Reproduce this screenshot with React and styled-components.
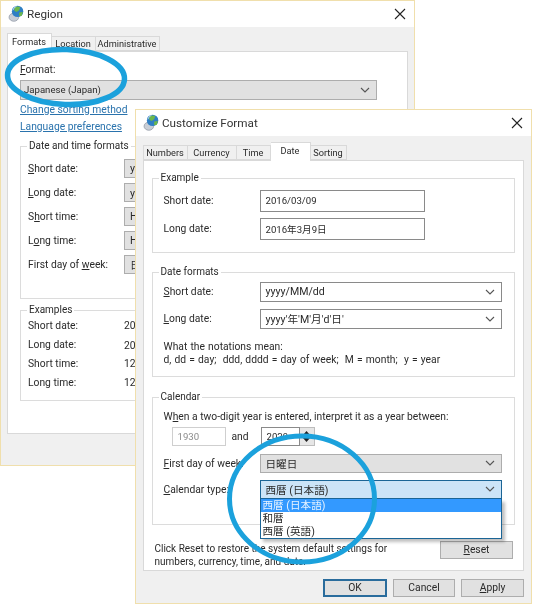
import React from "react";
import styled, { createGlobalStyle } from "styled-components";

const Global = createGlobalStyle`
  html, body { margin: 0; padding: 0; background: #fff; }
  * { box-sizing: border-box; }
`;

const Desktop = styled.div`
  position: relative;
  width: 539px;
  height: 607px;
  overflow: hidden;
  background: #fff;
  font-family: "Roboto", "Noto Sans CJK JP", sans-serif;
  font-size: 10.3px;
  color: #2a2a2a;
  filter: blur(0.3px);
`;

const Window = styled.section`
  position: absolute;
  left: ${(p) => p.$left}px;
  top: ${(p) => p.$top}px;
  width: ${(p) => p.$width}px;
  height: ${(p) => p.$height}px;
  display: flex;
  flex-direction: column;
  border: 1.5px solid #f0dfac;
  background: #fff;
`;

const TitleBar = styled.header`
  flex: 0 0 ${(p) => p.$h}px;
  display: flex;
  align-items: center;
  gap: 2px;
  padding: 0 8px 0 7px;
  background: #fff;
  font-size: 11.7px;
  color: #333;
`;

const TitleText = styled.span`
  flex: 1;
`;

const Body = styled.div`
  flex: 1;
  display: flex;
  flex-direction: column;
  background: #f0f0f0;
  padding: ${(p) => p.$pad};
`;

const TabStrip = styled.div`
  flex: 0 0 auto;
  height: ${(p) => p.$h}px;
  display: flex;
  align-items: flex-end;
  position: relative;
  z-index: 1;
`;

const Tab = styled.div`
  width: ${(p) => p.$w}px;
  height: ${(p) => (p.$active ? "calc(100% + 1px)" : "calc(100% - 3px)")};
  margin-bottom: ${(p) => (p.$active ? "-1px" : "0")};
  display: flex;
  align-items: center;
  justify-content: center;
  border: 1px solid #d9d9d9;
  border-bottom: ${(p) => (p.$active ? "none" : "1px solid #d9d9d9")};
  border-left-width: ${(p) => (p.$first ? 1 : 0)}px;
  background: ${(p) => (p.$active ? "#fff" : "#f0f0f0")};
  font-size: 9.2px;
  white-space: nowrap;
  padding-bottom: ${(p) => (p.$active ? 2 : 0)}px;
  padding-top: ${(p) => (p.$active ? 0 : 1)}px;
`;

const TabPanel = styled.div`
  height: ${(p) => p.$h}px;
  border: 1px solid #d9d9d9;
  background: #fff;
  padding: ${(p) => p.$pad};
  display: flex;
  flex-direction: column;
`;

const FieldLabel = styled.div`
  height: 14px;
  line-height: 14px;
`;

const Group = styled.div`
  position: relative;
  flex: 0 0 auto;
  height: ${(p) => p.$h}px;
  margin-top: ${(p) => p.$mt || 0}px;
  padding: ${(p) => p.$pad};
  border: 1px solid #dcdcdc;
`;

const Legend = styled.span`
  position: absolute;
  left: 6px;
  top: -8px;
  padding: 0 2px;
  font-size: 10px;
  line-height: 14px;
  background: #fff;
  white-space: nowrap;
`;

const Row = styled.div`
  display: grid;
  grid-template-columns: 96px 1fr;
  align-items: center;
  height: ${(p) => p.$h || 19}px;
  margin-top: ${(p) => p.$mt || 0}px;
  position: relative;
`;

const TextRow = styled(Row)`
  white-space: nowrap;
`;

const Select = styled.div`
  height: ${(p) => p.$h || "100%"};
  margin-top: ${(p) => p.$mt || 0}px;
  flex: none;
  display: flex;
  align-items: center;
  justify-content: space-between;
  padding: 0 6px 0 ${(p) => p.$pl || 5}px;
  font-size: ${(p) => p.$fs || 10.6}px;
  background: ${(p) =>
    p.$focus ? "#cce4f7" : p.$editable ? "#fff" : "#e1e1e1"};
  border: 1px solid
    ${(p) => (p.$focus ? "#1b6596" : p.$editable ? "#8a8a8a" : "#adadad")};
  white-space: nowrap;
  overflow: hidden;
`;

const Input = styled.div`
  width: ${(p) => p.$w}px;
  height: 100%;
  display: flex;
  align-items: center;
  padding: 0 5px;
  font-size: 9.6px;
  background: #fff;
  border: 1px solid ${(p) => (p.$disabled ? "#cfcfcf" : "#8a8a8a")};
  color: ${(p) => (p.$disabled ? "#8c8c8c" : "inherit")};
  white-space: nowrap;
`;

const YearRow = styled.div`
  display: flex;
  align-items: center;
  height: 19px;
  margin: 3px 0 0 8px;
`;

const And = styled.span`
  width: 35px;
  padding-left: 6px;
`;

const Spin = styled.div`
  width: 15px;
  height: 100%;
  display: flex;
  flex-direction: column;
  align-items: center;
  justify-content: space-evenly;
  background: #e6e6e6;
  border: 1px solid #bdbdbd;
  border-left: none;
  font-size: 0;
`;

const Arrow = styled.svg`
  width: 7px;
  height: 4px;
  fill: #222;
`;

const Link = styled.div`
  color: #2a73ad;
  text-decoration: underline;
  line-height: 14px;
  margin-top: ${(p) => p.$mt}px;
`;

const Notes = styled.div`
  margin-top: 11px;
  line-height: 13px;
  word-spacing: 0.6px;
  white-space: pre;
`;

const Intro = styled.div`
  line-height: 14px;
  white-space: nowrap;
`;

const Dropdown = styled.ul`
  position: absolute;
  left: 96px;
  right: 0;
  top: 100%;
  margin: 0;
  padding: 0;
  list-style: none;
  font-size: 10.6px;
  background: #fff;
  border: 1px solid #1b6596;
  border-top: none;
  box-shadow: 3px 3px 3px rgba(0, 0, 0, 0.25);
  z-index: 2;
`;

const Option = styled.li`
  height: 13px;
  line-height: 13px;
  padding-left: 2px;
  background: ${(p) => (p.$selected ? "#3399ff" : "transparent")};
  color: ${(p) => (p.$selected ? "#e8f3ff" : "inherit")};
`;

const HelpRow = styled.div`
  display: flex;
  justify-content: space-between;
  align-items: flex-start;
  margin: 17px 2px 0 3px;
`;

const HelpText = styled.div`
  font-size: 10px;
  line-height: 13px;
  white-space: nowrap;
`;

const ResetButton = styled.div`
  width: 73px;
  height: 18px;
  margin-top: -1px;
  display: flex;
  align-items: center;
  justify-content: center;
  background: #e1e1e1;
  border: 1px solid #adadad;
`;

const Button = styled.div`
  width: ${(p) => p.$w}px;
  height: 18px;
  display: flex;
  align-items: center;
  justify-content: center;
  background: #e1e1e1;
  border: ${(p) => (p.$default ? "2px solid #2a6c9c" : "1px solid #adadad")};
`;

const Footer = styled.footer`
  display: flex;
  justify-content: flex-end;
  gap: 6px;
  margin-top: 8px;
`;

const Rings = styled.svg`
  position: absolute;
  left: 0;
  top: 0;
  width: 539px;
  height: 607px;
  z-index: 5;
  pointer-events: none;
`;

const U = styled.span`
  text-decoration: underline;
`;

const CloseSvg = styled.svg`
  width: 12px;
  height: 12px;
  stroke: #222;
  stroke-width: 1.1;
  flex: none;
`;

const ChevronSvg = styled.svg`
  width: 10px;
  height: 6px;
  fill: none;
  stroke: #555;
  stroke-width: 1.1;
  flex: none;
`;

const GlobeSvg = styled.svg`
  width: 17px;
  height: 17px;
  flex: none;
`;

const Chevron = () => (
  <ChevronSvg viewBox="0 0 10 6">
    <polyline points="1,1 5,5 9,1" />
  </ChevronSvg>
);

const Close = () => (
  <CloseSvg viewBox="0 0 12 12">
    <path d="M1 1 L11 11 M11 1 L1 11" />
  </CloseSvg>
);

const Globe = () => (
  <GlobeSvg viewBox="0 0 16 16">
    <ellipse cx="5.5" cy="11.5" rx="4.5" ry="3.8" fill="#c9ced6" stroke="#8d96a3" strokeWidth="0.7" />
    <circle cx="9" cy="6" r="5.4" fill="#2f7fc4" />
    <path d="M6 2.5 Q9 0.5 11.5 2 L10.5 5 L8 6.5 L6 5.5 Z M10.5 7 L14 6.5 L13 10 L10.5 10.5 Z" fill="#6cb84a" />
    <path d="M4.5 5 Q5.5 2 8 1.2" stroke="#cfe6f7" strokeWidth="0.8" fill="none" />
  </GlobeSvg>
);

const App = () => (
  <Desktop>
    <Global />

    <Window $left={0} $top={0} $width={415} $height={466}>
      <TitleBar $h={25.5}>
        <Globe />
        <TitleText>Region</TitleText>
        <Close />
      </TitleBar>
      <Body $pad="6px 6px 0 5.5px">
        <TabStrip $h={18}>
          <Tab $w={45} $active $first>Formats</Tab>
          <Tab $w={44}>Location</Tab>
          <Tab $w={64}>Administrative</Tab>
        </TabStrip>
        <TabPanel $h={383} $pad="11px 30px 0 12.5px">
          <FieldLabel><U>F</U>ormat:</FieldLabel>
          <Select $h="20px" $mt={3} $fs={9.6} $pl={3}>Japanese (Japan)<Chevron /></Select>
          <Link $mt={3}>Change sorting method</Link>
          <Link $mt={3}>Language preferences</Link>
          <Group $h={153} $mt={12} $pad="12px 0 0 7px">
            <Legend>Date and time formats</Legend>
            <Row><span><U>S</U>hort date:</span><Select>yyyy/MM/dd<Chevron /></Select></Row>
            <Row $mt={5}><span><U>L</U>ong date:</span><Select>yyyy'年'M'月'd'日'<Chevron /></Select></Row>
            <Row $mt={5}><span>S<U>h</U>ort time:</span><Select>H:mm<Chevron /></Select></Row>
            <Row $mt={5}><span>L<U>o</U>ng time:</span><Select>H:mm:ss<Chevron /></Select></Row>
            <Row $mt={5}><span>First day of <U>w</U>eek:</span><Select>日曜日<Chevron /></Select></Row>
          </Group>
          <Group $h={91} $mt={11} $pad="5px 0 0 7px">
            <Legend>Examples</Legend>
            <TextRow $h={19}><span>Short date:</span><span>2016/03/09</span></TextRow>
            <TextRow $h={19}><span>Long date:</span><span>2016年3月9日</span></TextRow>
            <TextRow $h={19}><span>Short time:</span><span>12:00</span></TextRow>
            <TextRow $h={19}><span>Long time:</span><span>12:00:00</span></TextRow>
          </Group>
        </TabPanel>
      </Body>
    </Window>

    <Window $left={135} $top={109} $width={397} $height={495}>
      <TitleBar $h={25.5}>
        <Globe />
        <TitleText>Customize Format</TitleText>
        <Close />
      </TitleBar>
      <Body $pad="6px 7px 0 6.5px">
        <TabStrip $h={18}>
          <Tab $w={45} $first>Numbers</Tab>
          <Tab $w={49}>Currency</Tab>
          <Tab $w={34}>Time</Tab>
          <Tab $w={40} $active>Date</Tab>
          <Tab $w={36}>Sorting</Tab>
        </TabStrip>
        <TabPanel $h={411} $pad="17px 8px 0 8px">
          <Group $h={75} $pad="11px 12px 0 11px">
            <Legend>Example</Legend>
            <Row $h={22}><span>Short date:</span><Input $w={165}>2016/03/09</Input></Row>
            <Row $h={22} $mt={6}><span>Long date:</span><Input $w={165}>2016年3月9日</Input></Row>
          </Group>
          <Group $h={105} $mt={19} $pad="9px 12px 0 11px">
            <Legend>Date formats</Legend>
            <Row $h={20}><span><U>S</U>hort date:</span><Select $editable>yyyy/MM/dd<Chevron /></Select></Row>
            <Row $h={20} $mt={7}><span><U>L</U>ong date:</span><Select $editable>yyyy'年'M'月'd'日'<Chevron /></Select></Row>
            <Notes>{"What the notations mean:\nd, dd = day;  ddd, dddd = day of week;  M = month;  y = year"}</Notes>
          </Group>
          <Group $h={128} $mt={20} $pad="12px 12px 0 11px">
            <Legend>Calendar</Legend>
            <Intro>W<U>h</U>en a two-digit year is entered, interpret it as a year between:</Intro>
            <YearRow>
              <Input $w={54} $disabled>1930</Input>
              <And>and</And>
              <Input $w={39}>2029</Input>
              <Spin>
                <Arrow viewBox="0 0 7 4"><path d="M3.5 0 L7 4 L0 4 Z" /></Arrow>
                <Arrow viewBox="0 0 7 4"><path d="M0 0 L7 0 L3.5 4 Z" /></Arrow>
              </Spin>
            </YearRow>
            <Row $mt={8}><span><U>F</U>irst day of week:</span><Select>日曜日<Chevron /></Select></Row>
            <Row $mt={7}>
              <span><U>C</U>alendar type:</span>
              <Select $focus>西暦 (日本語)<Chevron /></Select>
              <Dropdown>
                <Option $selected>西暦 (日本語)</Option>
                <Option>和暦</Option>
                <Option>西暦 (英語)</Option>
              </Dropdown>
            </Row>
          </Group>
          <HelpRow>
            <HelpText>Click Reset to restore the system default settings for<br />numbers, currency, time, and date.</HelpText>
            <ResetButton><U>R</U>eset</ResetButton>
          </HelpRow>
        </TabPanel>
        <Footer>
          <Button $w={64} $default>OK</Button>
          <Button $w={62}>Cancel</Button>
          <Button $w={63}><U>A</U>pply</Button>
        </Footer>
      </Body>
    </Window>

    <Rings viewBox="0 0 539 607">
      <ellipse cx="66" cy="77" rx="58.5" ry="27.5" fill="none" stroke="#1ba1dc" strokeWidth="5.5" transform="rotate(2 66 77)" />
      <ellipse cx="302" cy="499" rx="72.5" ry="63" fill="none" stroke="#1ba1dc" strokeWidth="5" />
    </Rings>
  </Desktop>
);

export default App;
